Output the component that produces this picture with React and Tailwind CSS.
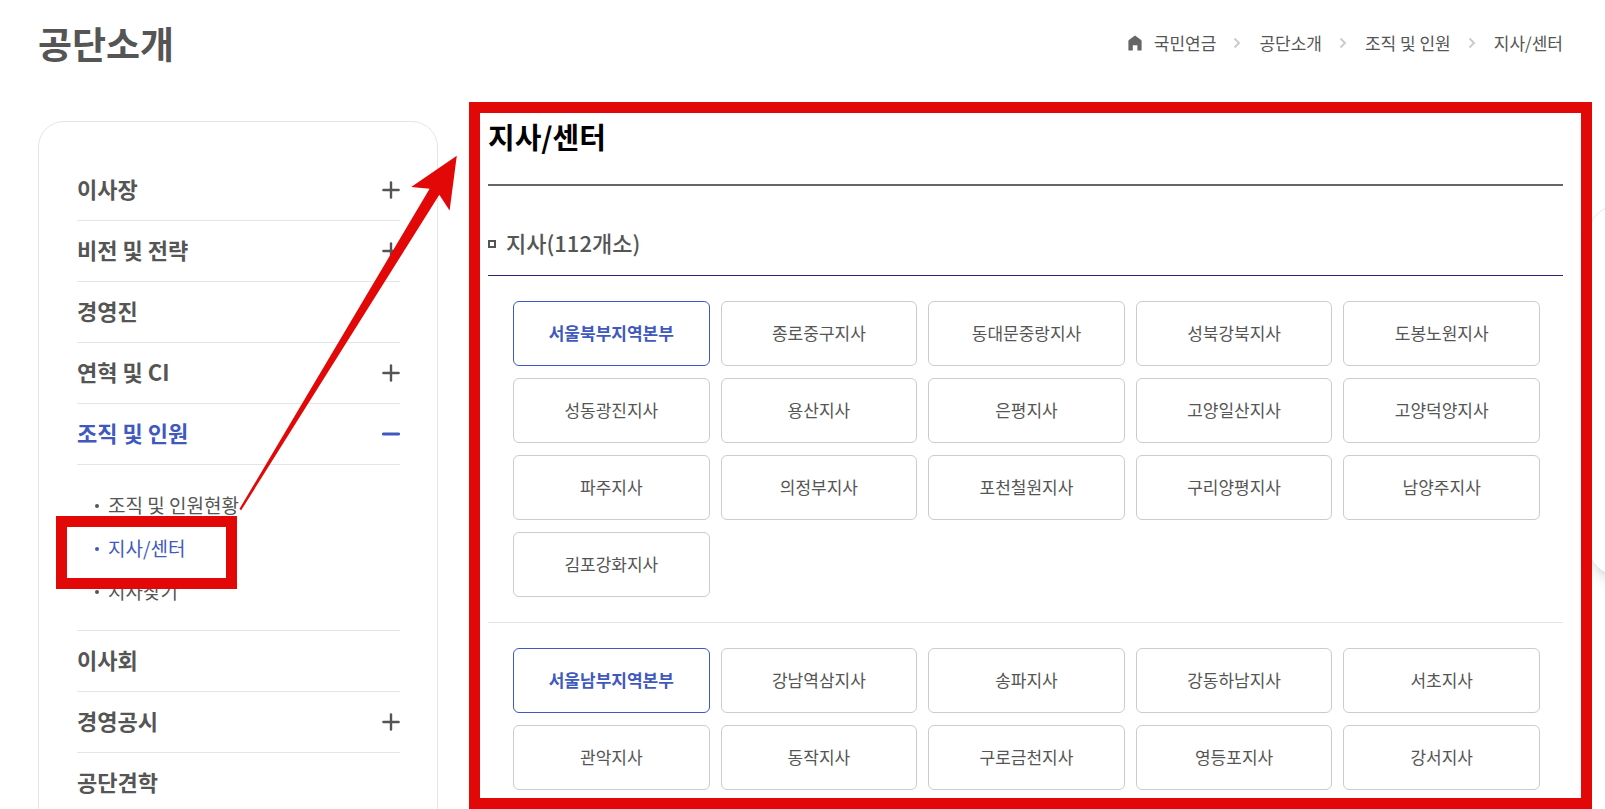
import React from "react";

const breadcrumbs = ["국민연금", "공단소개", "조직 및 인원", "지사/센터"];

const menu = [
  { label: "이사장", expandable: true },
  { label: "비전 및 전략", expandable: true },
  { label: "경영진" },
  { label: "연혁 및 CI", expandable: true },
  {
    label: "조직 및 인원",
    expandable: true,
    open: true,
    children: [
      { label: "조직 및 인원현황" },
      { label: "지사/센터", active: true },
      { label: "지사찾기" },
    ],
  },
  { label: "이사회" },
  { label: "경영공시", expandable: true },
  { label: "공단견학" },
];

const regions = [
  [
    "서울북부지역본부",
    "종로중구지사",
    "동대문중랑지사",
    "성북강북지사",
    "도봉노원지사",
    "성동광진지사",
    "용산지사",
    "은평지사",
    "고양일산지사",
    "고양덕양지사",
    "파주지사",
    "의정부지사",
    "포천철원지사",
    "구리양평지사",
    "남양주지사",
    "김포강화지사",
  ],
  [
    "서울남부지역본부",
    "강남역삼지사",
    "송파지사",
    "강동하남지사",
    "서초지사",
    "관악지사",
    "동작지사",
    "구로금천지사",
    "영등포지사",
    "강서지사",
  ],
];

function HomeIcon() {
  return (
    <svg width="14" height="16" viewBox="0 0 14 16" fill="#666666" aria-hidden="true">
      <path d="M7 0.4 L13.1 5 Q13.6 5.4 13.6 6 V15 Q13.6 15.6 13 15.6 H9.4 V10.2 H4.8 V15.6 H1 Q0.4 15.6 0.4 15 V6 Q0.4 5.4 0.9 5 Z" />
    </svg>
  );
}

function ChevronIcon() {
  return (
    <svg
      width="8"
      height="12"
      viewBox="0 0 8 12"
      fill="none"
      stroke="#cccccc"
      strokeWidth="2"
      aria-hidden="true"
    >
      <path d="M1.5 1.5 L6 6 L1.5 10.5" />
    </svg>
  );
}

function ToggleIcon({ open }) {
  return (
    <svg
      width="18"
      height="18"
      viewBox="0 0 18 18"
      fill="none"
      stroke="currentColor"
      strokeWidth={open ? 3 : 2.4}
      strokeLinecap="round"
      aria-hidden="true"
    >
      <path d="M1.4 9 H16.6" />
      {!open && <path d="M9 1.4 V16.6" />}
    </svg>
  );
}

function Breadcrumb() {
  return (
    <nav aria-label="breadcrumb">
      <ol className="flex items-center text-[17px] leading-6">
        {breadcrumbs.map((item, i) => (
          <li key={item} className="flex items-center">
            {i > 0 && (
              <span className="mr-[18px] ml-[17px]">
                <ChevronIcon />
              </span>
            )}
            <a href="#" className="flex items-center gap-3">
              {i === 0 && <HomeIcon />}
              {item}
            </a>
          </li>
        ))}
      </ol>
    </nav>
  );
}

function MenuItem({ item }) {
  return (
    <li>
      <button
        type="button"
        className={`flex w-full h-[61px] items-center justify-between border-b border-[#e5e5e5] text-left text-[22px] font-bold ${
          item.open ? "text-[#4059be]" : "text-[#555555]"
        }`}
      >
        <span className="pb-[3px]">{item.label}</span>
        {item.expandable && <ToggleIcon open={item.open} />}
      </button>
      {item.children && (
        <ul className="border-b border-[#e5e5e5] pt-[19px] pb-[17px] pl-[18px] text-[19px]">
          {item.children.map((child) => (
            <li key={child.label}>
              <a
                href="#"
                className={`flex h-[43px] items-center gap-[9px] ${
                  child.active ? "text-[#4059be]" : "text-[#555555]"
                }`}
              >
                <span className="size-1 rounded-full bg-current" />
                {child.label}
              </a>
            </li>
          ))}
        </ul>
      )}
    </li>
  );
}

function BranchGrid({ branches }) {
  return (
    <ul className="grid grid-cols-5 gap-x-[11px] gap-y-3 border-b border-[#e5e5e5] py-[25px] pr-[23px] pl-[25px]">
      {branches.map((branch, i) => (
        <li key={branch}>
          <button
            type="button"
            className={`h-[65px] w-full rounded-md border pb-[2px] text-[17px] ${
              i === 0
                ? "border-[#4059be] font-bold text-[#4059be]"
                : "border-[#cccccc] text-[#555555]"
            }`}
          >
            {branch}
          </button>
        </li>
      ))}
    </ul>
  );
}

// red marker frames and the arrow drawn over the page
function Annotations() {
  return (
    <div className="pointer-events-none absolute inset-0">
      <div className="absolute top-[102px] right-[13px] bottom-0 left-[469px] border-11 border-[#e20807]" />
      <div className="absolute top-[516px] left-[56px] h-[73px] w-[181px] border-11 border-[#e20807]" />
      <svg
        className="absolute top-[150px] left-[230px]"
        width="240"
        height="370"
        viewBox="230 150 240 370"
        fill="#e20807"
        aria-hidden="true"
      >
        <path d="M456.8 155.8 L449.6 210.6 L439.3 194.8 L241.2 510.2 L239.4 509 L429.6 188.8 L411.2 187 Z" />
      </svg>
    </div>
  );
}

export default function App() {
  return (
    <div className="relative h-screen overflow-hidden bg-white font-['Noto_Sans_CJK_KR','Noto_Sans',sans-serif] text-[#555555]">
      <header className="flex h-[121px] items-start justify-between pt-[15px] pr-[42px] pl-[38px]">
        <h1 className="text-[37px] leading-[56px] font-bold">공단소개</h1>
        <div className="pt-4">
          <Breadcrumb />
        </div>
      </header>

      <main className="flex items-start gap-[50px] pr-[42px] pl-[38px]">
        <aside className="w-[400px] shrink-0 rounded-[26px] border border-[#e5e5e5] pt-[38px] pr-[37px] pb-20 pl-[38px]">
          <ul>
            {menu.map((item) => (
              <MenuItem key={item.label} item={item} />
            ))}
          </ul>
        </aside>

        <section className="min-w-0 flex-1">
          <h2 className="border-b-2 border-[#666666] pb-[33px] text-[29px] leading-[30px] font-bold text-black">
            지사/센터
          </h2>
          <h3 className="mt-[42px] flex items-center gap-[10px] border-b border-[#29237b] pb-[15px] text-[22px] leading-7 font-medium">
            <span className="size-2 border-2 border-[#555555]" />
            <span className="pb-1">지사(112개소)</span>
          </h3>
          {regions.map((branches) => (
            <BranchGrid key={branches[0]} branches={branches} />
          ))}
        </section>
      </main>

      <div className="absolute top-[205px] -right-20 h-[371px] w-[97px] rounded-[30px] border border-[#e5e5e5] bg-white shadow-lg" />
      <Annotations />
    </div>
  );
}
